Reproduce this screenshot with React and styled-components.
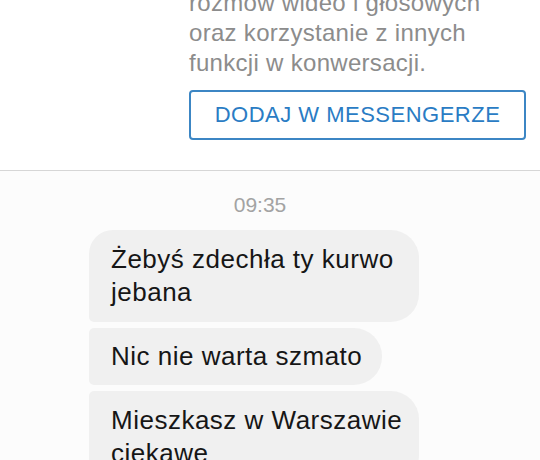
import React from "react";
import styled, { createGlobalStyle } from "styled-components";

const Global = createGlobalStyle`
  html, body { margin: 0; padding: 0; background: #fcfcfc; }
  body { font-family: "Liberation Sans", Arial, sans-serif; }
`;

const Page = styled.div`
  width: 540px;
  height: 460px;
  overflow: hidden;
  display: flex;
  flex-direction: column;
`;

const Info = styled.section`
  background: #ffffff;
  height: 183px;
  flex: none;
  box-sizing: border-box;
  border-bottom: 1px solid #d6d6d6;
  padding-left: 189px;
  padding-right: 14px;
  margin-top: -12px;
  display: flex;
  flex-direction: column;
`;

const InfoText = styled.p`
  margin: 0;
  color: #8c8c8c;
  font-size: 24px;
  line-height: 30px;
  letter-spacing: 0.3px;
  white-space: nowrap;
`;

const AddButton = styled.button`
  margin-top: 12px;
  width: 337px;
  height: 50px;
  box-sizing: border-box;
  border: 2px solid #3c86c4;
  border-radius: 4px;
  background: #fff;
  color: #2a7cc4;
  font-family: "Liberation Sans", Arial, sans-serif;
  font-size: 22px;
  letter-spacing: 0.5px;
  text-transform: uppercase;
  padding: 0;
`;

const Thread = styled.section`
  flex: 1;
  display: flex;
  flex-direction: column;
  align-items: flex-start;
  padding-left: 89px;
`;

const Time = styled.div`
  align-self: stretch;
  margin-left: -89px;
  margin-top: 22px;
  margin-bottom: 13px;
  text-align: center;
  color: #a3a3a3;
  font-size: 21px;
  line-height: 24px;
  padding-right: 20px;
`;

const Bubble = styled.div`
  background: #f0f0f0;
  color: #161616;
  font-size: 26px;
  letter-spacing: 0.5px;
  line-height: 33px;
  white-space: nowrap;
  padding: ${(p) => (p.$multi ? "13px" : "12px")} 20px
    ${(p) => (p.$multi ? "13px" : "12px")} 22px;
  margin-bottom: 6px;
  border-radius: ${(p) => (p.$first ? "24px" : "5px")} 28px 28px 5px;
  box-sizing: border-box;
  width: ${(p) => p.$w || "auto"};
`;

export default function App() {
  return (
    <>
      <Global />
      <Page>
        <Info>
          <InfoText>
            rozmów wideo i głosowych
            <br />
            oraz korzystanie z innych
            <br />
            funkcji w konwersacji.
          </InfoText>
          <AddButton>Dodaj w Messengerze</AddButton>
        </Info>
        <Thread>
          <Time>09:35</Time>
          <Bubble $first $multi $w="330px">
            Żebyś zdechła ty kurwo
            <br />
            jebana
          </Bubble>
          <Bubble>Nic nie warta szmato</Bubble>
          <Bubble $multi $w="330px">
            Mieszkasz w Warszawie
            <br />
            ciekawe
          </Bubble>
        </Thread>
      </Page>
    </>
  );
}
